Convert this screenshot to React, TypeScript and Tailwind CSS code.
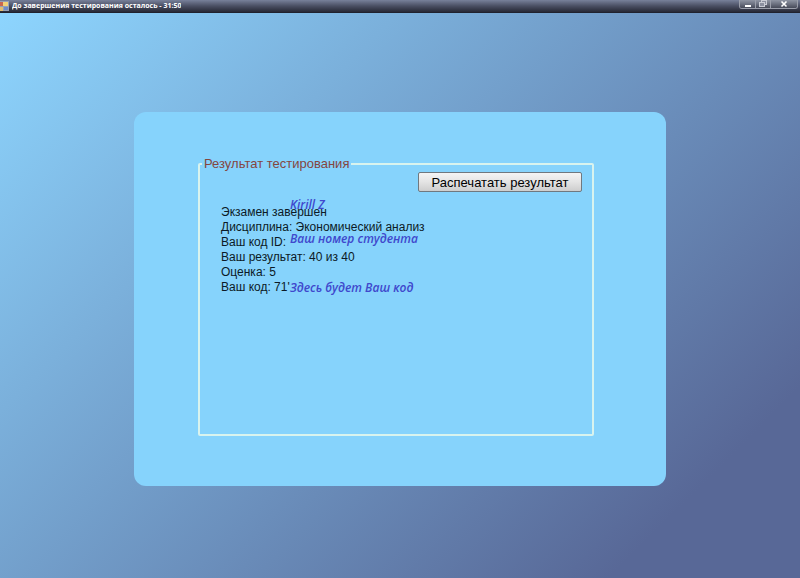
const results = [
  { id: 'status', text: 'Экзамен завершен', note: 'Kirill Z', notePosition: '-top-2' },
  { id: 'subject', text: 'Дисциплина: Экономический анализ' },
  { id: 'student', text: 'Ваш код ID:', note: 'Ваш номер студента', notePosition: '-top-1' },
  { id: 'score', text: 'Ваш результат: 40 из 40' },
  { id: 'grade', text: 'Оценка: 5' },
  { id: 'code', text: "Ваш код: 71'", note: 'Здесь будет Ваш код', notePosition: 'top-0' },
]

function AppIcon() {
  return (
    <svg viewBox="0 0 10 11" className="h-[11px] w-[10px] shrink-0" aria-hidden="true">
      <rect x="0" y="0" width="9" height="10" fill="#98a1b5" />
      <rect x="0" y="1" width="3" height="4" fill="#c9674f" />
      <rect x="3" y="1" width="5" height="4" fill="#f3d277" />
      <rect x="0" y="6" width="3" height="4" fill="#e0bd72" />
      <rect x="4" y="6" width="4" height="3" fill="#6f8cc8" />
    </svg>
  )
}

function TitleBar() {
  const button =
    'flex h-full items-center justify-center border-r border-[#9a9eaa] bg-linear-to-b from-[#8f95a3] via-[#6c7180] to-[#474b59] last:border-r-0'

  return (
    <header className="flex h-[13px] items-start justify-between border-b border-[#20222e] bg-linear-to-b from-[#78819a] via-[#4a4f63] to-[#272936]">
      <div className="flex min-w-0 items-center gap-0.5">
        <AppIcon />
        <h1 className="truncate font-['Open_Sans',sans-serif] text-[7px] leading-3 font-bold text-white">
          До завершения тестирования осталось - 31:50
        </h1>
      </div>
      <div className="mr-0.5 flex h-[9px] shrink-0 overflow-hidden rounded-b-[3px] border border-t-0 border-[#9a9eaa]">
        <button type="button" aria-label="Свернуть" className={`${button} w-4`}>
          <svg viewBox="0 0 8 8" className="size-2" aria-hidden="true">
            <path d="M1 5h6v2H1z" fill="#fff" />
          </svg>
        </button>
        <button type="button" aria-label="Восстановить" className={`${button} w-[15px]`}>
          <svg viewBox="0 0 8 8" className="size-2" fill="#8b90a0" stroke="#c9ccd5" aria-hidden="true">
            <rect x="2.5" y="0.5" width="5" height="4" />
            <rect x="0.5" y="2.5" width="5" height="4" />
          </svg>
        </button>
        <button type="button" aria-label="Закрыть" className={`${button} w-[26px]`}>
          <svg viewBox="0 0 8 8" className="size-2" aria-hidden="true">
            <path d="M1.500 1.500l5 5M6.500 1.500l-5 5" stroke="#fff" strokeWidth="1.600" />
          </svg>
        </button>
      </div>
    </header>
  )
}

export default function App() {
  return (
    <div className="flex min-h-screen flex-col bg-[#586897] font-['Liberation_Sans',Arial,sans-serif] text-[12px] leading-[15px] text-[#0c1a26]">
      <TitleBar />
      <main className="grow bg-[linear-gradient(135deg,#8dd5fe_0%,#586897_86%)] px-4 pt-[99px] pb-8">
        <section className="mx-auto max-w-[532px] rounded-xl bg-[#86d3fc] px-16 pt-11 pb-[50px]">
          <fieldset className="mr-2 min-h-[280px] rounded-xs border-2 border-[#d8f3ee] px-0.5">
            <legend className="px-0.5 text-[13px] text-[#84463f]">Результат тестирования</legend>
            <div className="flex justify-end pt-px pr-2">
              <button
                type="button"
                className="h-5 w-[164px] rounded-xs border border-[#70787f] bg-linear-to-b from-[#f4f4f4] via-[#e4e4e4] to-[#cdcdcd] text-[13px] text-black"
              >
                Распечатать результат
              </button>
            </div>
            <ul className="mt-[13px] pl-[19px]">
              {results.map((row) => (
                <li key={row.id} className="relative">
                  {row.text}
                  {row.note && (
                    <span
                      className={`absolute left-[69px] whitespace-nowrap font-['Open_Sans',sans-serif] font-semibold text-[#3f48cc] italic ${row.notePosition}`}
                    >
                      {row.note}
                    </span>
                  )}
                </li>
              ))}
            </ul>
          </fieldset>
        </section>
      </main>
    </div>
  )
}
